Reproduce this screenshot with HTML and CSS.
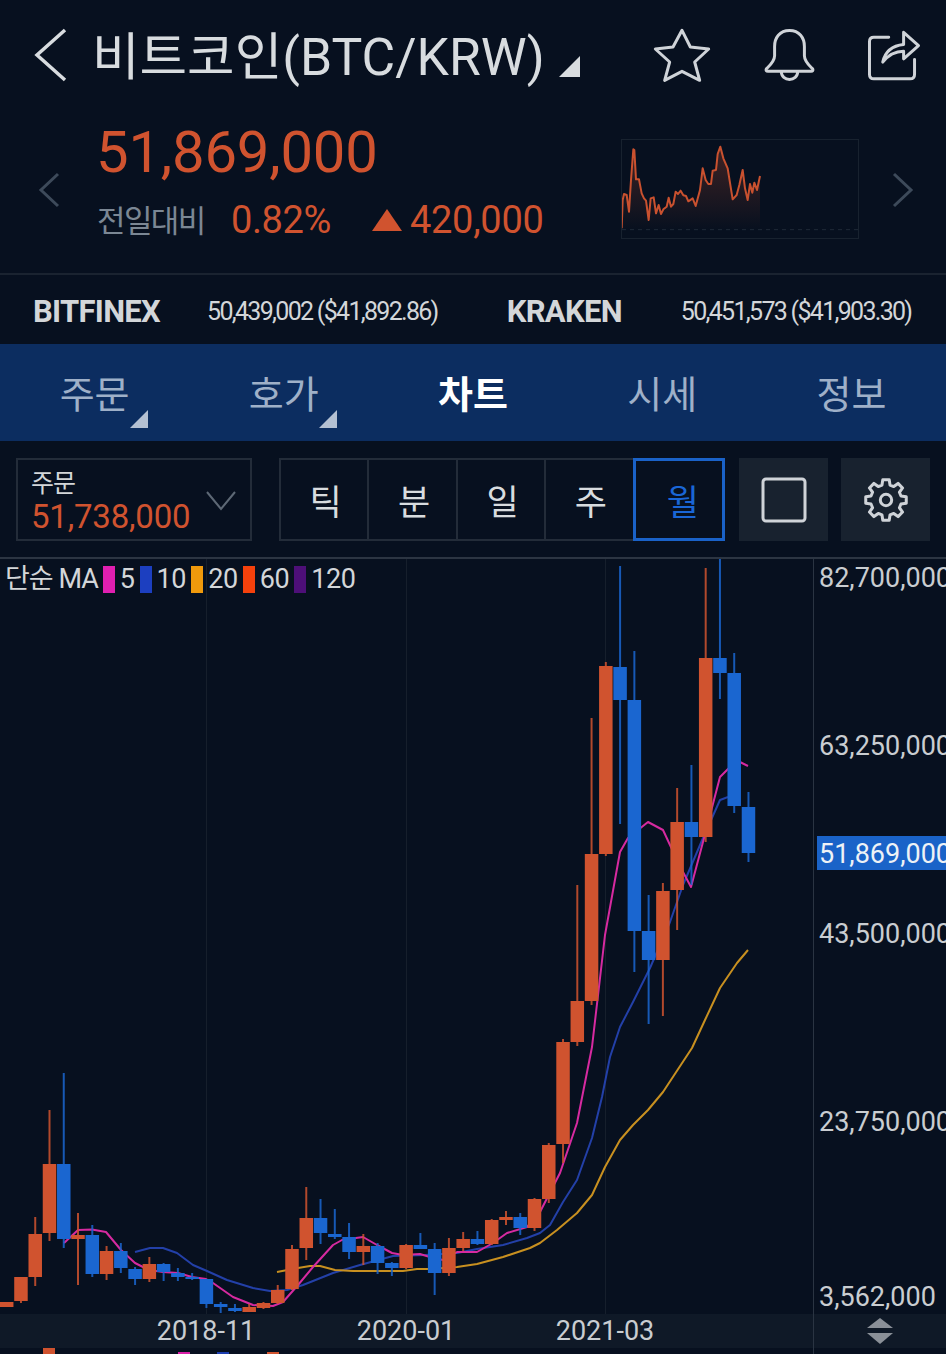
FILE: index.html
```html
<!DOCTYPE html>
<html lang="ko">
<head>
  <meta charset="UTF-8" />
  <meta name="viewport" content="width=device-width, initial-scale=1.0"/>
  <title>비트코인 차트</title>
  <link rel="stylesheet" href="styles.css">
</head>
<body>

  <header class="topbar">
    <svg class="back" width="36" height="56" viewBox="0 0 36 56"><path d="M32 3 L4 28 L32 53" /></svg>
    <h1 class="coin">비트코인(BTC/KRW)</h1>
    <span class="corner corner-title"></span>
    <div class="top-icons">
      <svg width="58" height="55" viewBox="40 35 174 165"><path d="M127 42 L152 92 L207 98 L165 137 L180 192 L127 165 L75 192 L90 137 L47 98 L100 92 Z" /></svg>
      <svg width="53" height="55" viewBox="365 35 160 165"><path d="M445 42 C415 42 400 65 400 90 L400 118 C400 135 385 148 375 158 Q372 165 380 165 L510 165 Q518 165 515 158 C505 148 490 135 490 118 L490 90 C490 65 475 42 445 42 Z M420 165 C420 198 470 198 470 165" /></svg>
      <svg width="55" height="53" viewBox="680 35 165 160"><path d="M745 60 L700 60 Q687 60 687 73 L687 172 Q687 185 700 185 L810 185 Q823 185 823 172 L823 127" /><path d="M727 135 C735 100 760 85 790 82 L790 45 L835 85 L790 125 L790 102 C765 102 745 112 727 135 Z" /></svg>
    </div>
  </header>

  <section class="price-row">
    <svg class="nav-arrow" width="22" height="36" viewBox="0 0 22 36"><path d="M20 2 L3 18 L20 34" /></svg>
    <div class="price-block">
      <div class="price">51,869,000</div>
      <div class="change">
        <span class="change-label">전일대비</span>
        <span class="change-pct">0.82%</span>
        <span class="change-tri"></span>
        <span class="change-amt">420,000</span>
      </div>
    </div>
    <div class="spark">
      <svg width="236" height="98" viewBox="36 30 708 294">
        <defs>
          <linearGradient id="sparkFill" x1="0" y1="0" x2="0" y2="1">
            <stop offset="0" stop-color="#d0532f" stop-opacity="0.28"/>
            <stop offset="1" stop-color="#d0532f" stop-opacity="0"/>
          </linearGradient>
        </defs>
        <polygon id="sparkArea" fill="url(#sparkFill)" />
        <line x1="36" y1="299" x2="744" y2="299" stroke="#1f2a38" stroke-width="3" stroke-dasharray="12 12" />
        <polyline id="sparkLine" fill="none" stroke="#c9512f" stroke-width="6" stroke-linejoin="round" />
      </svg>
    </div>
    <svg class="nav-arrow next" width="22" height="36" viewBox="0 0 22 36"><path d="M2 2 L19 18 L2 34" /></svg>
  </section>

  <section class="exchanges">
    <b class="ex-name">BITFINEX</b>
    <span class="ex-val">50,439,002 ($41,892.86)</span>
    <b class="ex-name">KRAKEN</b>
    <span class="ex-val">50,451,573 ($41,903.30)</span>
  </section>

  <nav class="tabs">
    <div class="tab">주문<span class="corner corner-tab"></span></div>
    <div class="tab">호가<span class="corner corner-tab"></span></div>
    <div class="tab active">차트</div>
    <div class="tab">시세</div>
    <div class="tab">정보</div>
  </nav>

  <section class="toolbar">
    <div class="order-box">
      <div>
        <div class="order-label">주문</div>
        <div class="order-val">51,738,000</div>
      </div>
      <svg width="30" height="20" viewBox="0 0 30 20"><path d="M1 1 L15 18 L29 1" /></svg>
    </div>
    <div class="periods">
      <button>틱</button>
      <button>분</button>
      <button>일</button>
      <button>주</button>
      <button class="on">월</button>
    </div>
    <button class="tool">
      <svg width="46" height="46" viewBox="0 0 46 46"><rect x="2" y="2" width="42" height="42" rx="3" /></svg>
    </button>
    <button class="tool">
      <svg width="46" height="46" viewBox="-23 -23 46 46"><path id="gear" /><circle cx="0" cy="0" r="5.700" /></svg>
    </button>
  </section>

  <section class="chart">
    <div class="legend">
      <span class="legend-name">단순 MA</span>
      <i class="sw pink"></i><span>5</span>
      <i class="sw navy"></i><span>10</span>
      <i class="sw amber"></i><span>20</span>
      <i class="sw red"></i><span>60</span>
      <i class="sw violet"></i><span>120</span>
    </div>
    <svg id="chart" width="946" height="795" viewBox="0 559 946 795">
      <g class="grid">
        <line x1="206.500" y1="559" x2="206.500" y2="1314" />
        <line x1="406.500" y1="559" x2="406.500" y2="1314" />
        <line x1="605.500" y1="559" x2="605.500" y2="1314" />
      </g>
      <line class="axis-line" x1="813.500" y1="559" x2="813.500" y2="1354" />
      <g id="maLines"></g>
      <g id="candles"></g>
      <rect class="date-bar" x="0" y="1314" width="946" height="34" />
      <line class="axis-line" x1="813.500" y1="1314" x2="813.500" y2="1354" />
      <g class="axis-text">
        <text x="819" y="587">82,700,000</text>
        <text x="819" y="755">63,250,000</text>
        <rect class="last-price" x="817" y="836" width="129" height="34" />
        <text x="819" y="863" class="last-text">51,869,000</text>
        <text x="819" y="943">43,500,000</text>
        <text x="819" y="1131">23,750,000</text>
        <text x="819" y="1306">3,562,000</text>
      </g>
      <g class="date-text">
        <text x="206" y="1340">2018-11</text>
        <text x="406" y="1340">2020-01</text>
        <text x="605" y="1340">2021-03</text>
      </g>
      <polygon class="resize" points="880,1318 893,1328 867,1328" />
      <polygon class="resize" points="867,1333 893,1333 880,1344" />
      <rect class="peek p-red" x="43" y="1348" width="12" height="6" />
      <rect class="peek p-pink" x="178" y="1352" width="12" height="2" />
      <rect class="peek p-navy" x="217" y="1352" width="12" height="2" />
      <rect class="peek p-red" x="267" y="1352" width="12" height="2" />
    </svg>
  </section>

  <script src="chart.js"></script>
</body>
</html>
```

FILE: styles.css
```css
* { box-sizing: border-box; }
html, body {
  margin: 0;
  width: 946px;
  height: 1354px;
  overflow: hidden;
  background: #07101f;
  color: #d8dcdf;
  font-family: Roboto, "Noto Sans CJK KR", sans-serif;
}
svg { display: block; }

.topbar {
  height: 110px;
  display: flex;
  align-items: center;
  padding-left: 33px;
}
.back path { stroke: #d8dcdf; stroke-width: 3.5; fill: none; }
.coin {
  margin: -6px 0 0 23px;
  font-size: 51.7px;
  font-weight: 400;
  color: #d8dcdf;
  white-space: nowrap;
}
.corner {
  display: block;
  width: 0;
  height: 0;
  border-style: solid;
  border-color: transparent;
}
.corner-title {
  margin: 22px 0 0 14px;
  border-width: 0 0 21px 21px;
  border-bottom-color: #d8dcdf;
}
.top-icons {
  margin-left: auto;
  display: flex;
  align-items: center;
  gap: 51.5px;
  padding-right: 24px;
}
.top-icons path { stroke: #cfd3d8; stroke-width: 9; stroke-linejoin: round; stroke-linecap: round; fill: none; }

.price-row {
  height: 165px;
  display: flex;
  align-items: flex-start;
  padding-left: 38px;
  border-bottom: 2px solid #1a2330;
}
.nav-arrow { margin-top: 62px; }
.nav-arrow path { stroke: #3d4a5a; stroke-width: 3; fill: none; }
.nav-arrow.next { margin-left: 33px; }
.price-block { margin-left: 36px; width: 525px; }
.price {
  font-size: 58px;
  line-height: 68px;
  margin-top: 8px;
  letter-spacing: -0.2px;
  color: #d0532f;
}
.change {
  display: flex;
  align-items: center;
  margin-top: 12px;
  height: 44px;
}
.change-label { font-size: 31px; letter-spacing: -1.6px; color: #7b8794; width: 134px; margin-left: 1px; margin-top: -3px; }
.change-pct { font-size: 38px; letter-spacing: -0.4px; color: #d0532f; width: 141px; }
.change-tri {
  width: 0;
  height: 0;
  border-style: solid;
  border-width: 0 15.5px 22px;
  border-color: transparent transparent #d0532f;
  margin-right: 8px;
}
.change-amt { font-size: 38px; letter-spacing: -0.3px; color: #d0532f; }
.spark {
  margin-top: 29px;
  width: 238px;
  height: 100px;
  border: 1px solid #18222f;
}

.exchanges {
  height: 69px;
  display: flex;
  align-items: center;
  padding: 4px 0 0 33px;
}
.ex-name { font-size: 31px; letter-spacing: -0.7px; color: #d3d6d9; font-weight: 700; }
.ex-val { font-size: 25px; letter-spacing: -1.7px; color: #d3d6d9; margin-left: 47px; margin-right: 69px; }
.ex-val:last-child { margin-right: 0; margin-left: 59px; }

.tabs {
  height: 97px;
  display: grid;
  grid-template-columns: repeat(5, 1fr);
  background: #0c2d60;
}
.tab {
  position: relative;
  display: flex;
  align-items: center;
  justify-content: center;
  font-size: 38px;
  color: #9fb0c8;
  padding-bottom: 2px;
}
.tab.active { color: #fff; font-weight: 700; }
.corner-tab {
  position: absolute;
  right: 41px;
  bottom: 13px;
  border-width: 0 0 18px 18px;
  border-bottom-color: #b4c0d2;
}

.toolbar {
  height: 118px;
  display: flex;
  align-items: flex-start;
  padding: 17px 0 0 16px;
  border-bottom: 2px solid #2c3542;
}
.order-box {
  width: 236px;
  height: 83px;
  border: 2px solid #232c39;
  padding: 10px 14px 8px 13px;
  display: flex;
  align-items: center;
  justify-content: space-between;
}
.order-box path { stroke: #5d6875; stroke-width: 2; fill: none; }
.order-label { font-size: 25px; line-height: 32px; color: #d3d6d9; letter-spacing: -1px; }
.order-val { font-size: 33px; line-height: 34px; color: #d0532f; letter-spacing: -0.2px; }
.periods {
  margin-left: 27px;
  display: flex;
  width: 446px;
  height: 83px;
  border: 2px solid #232c39;
}
.periods button {
  flex: 1 1 0;
  background: none;
  border: 0;
  border-right: 2px solid #232c39;
  color: #d8dcdf;
  font-family: inherit;
  font-size: 35px;
  padding: 0;
  text-indent: 3px;
}
.periods button.on {
  border: 3px solid #1a62c8;
  color: #1a66d6;
  margin: -2px;
  text-indent: 8px;
}
.tool {
  margin-left: 14px;
  width: 89px;
  height: 83px;
  padding: 0;
  border: 0;
  background: #18222f;
  display: flex;
  align-items: center;
  justify-content: center;
}
.tool + .tool { margin-left: 13px; }
.tool rect, .tool path, .tool circle { stroke: #cfd3d8; stroke-width: 3; stroke-linejoin: round; fill: none; }

.chart { position: relative; height: 795px; }
.legend {
  position: absolute;
  left: 5px;
  top: 6px;
  display: flex;
  align-items: center;
  font-size: 27px;
  line-height: 28px;
  letter-spacing: -0.4px;
  color: #d3d6d9;
}
.legend-name { letter-spacing: -1px; }
.sw { display: block; width: 12px; height: 27px; margin: 0 5px 0 5px; }
.pink { background: #e01fb0; }
.navy { background: #1c3fc0; }
.amber { background: #f09a0c; }
.red { background: #f5410c; }
.violet { background: #4d0f78; }

.grid line { stroke: #161f2c; stroke-width: 1; }
.axis-line { stroke: #2a3442; stroke-width: 1; }
.date-bar { fill: #0f1927; }
.axis-text text { font-size: 27px; fill: #c9cdd1; }
.axis-text .last-text { fill: #eef2f6; }
.last-price { fill: #1a63c8; }
.date-text text { font-size: 27px; fill: #c9cdd1; text-anchor: middle; }
.resize { fill: #8a9098; }
.p-red { fill: #d0532f; }
.p-pink { fill: #d91fa8; }
.p-navy { fill: #1c3db0; }
```

FILE: chart.js
```js
// monthly candles: dir, body top, body bottom, wick top, wick bottom (page y)
const candles = [
  ["u",1302,1307,1302,1307],["u",1277,1301,1277,1303],["u",1234,1277,1217,1286],["u",1164,1233,1110,1241],
  ["d",1164,1239,1073,1248],["u",1235,1239,1213,1285],["d",1235,1274,1225,1277],["u",1251,1274,1246,1280],
  ["d",1251,1268,1243,1273],["d",1269,1279,1267,1285],["u",1264,1279,1257,1282],["d",1264,1272,1263,1281],
  ["d",1273,1277,1268,1281],["d",1277,1279,1273,1280],["d",1279,1304,1279,1308],["d",1304,1307,1302,1313],
  ["d",1308,1311,1304,1312],["u",1307,1312,1304,1312],["u",1303,1308,1302,1309],["u",1290,1303,1285,1304],
  ["u",1249,1289,1245,1290],["u",1218,1248,1187,1260],["d",1218,1233,1199,1244],["d",1234,1237,1209,1239],
  ["d",1237,1252,1223,1259],["u",1246,1252,1234,1265],["d",1246,1263,1243,1274],["d",1263,1268,1262,1276],
  ["u",1245,1268,1244,1269],["d",1245,1249,1233,1249],["d",1249,1273,1243,1295],["u",1248,1273,1238,1276],
  ["u",1239,1248,1232,1251],["d",1239,1244,1231,1245],["u",1220,1244,1219,1245],["u",1217,1220,1211,1225],
  ["d",1217,1228,1213,1235],["u",1199,1228,1198,1231],["u",1145,1199,1143,1203],["u",1042,1144,1039,1163],
  ["u",1001,1042,885,1046],["u",854,1001,718,1005],["u",666,854,662,856],["d",667,700,566,824],
  ["d",700,931,651,972],["d",931,960,895,1024],["u",891,960,883,1016],["u",822,890,788,930],
  ["d",822,837,765,885],["u",658,837,568,842],["d",658,673,558,699],["d",673,806,653,813],
  ["d",807,853,792,862]
];

const maLines = [
  { color: "#2340a8", width: 2, pts: [135,1252,150,1248,163,1248,177,1253,193,1265,207,1271,227,1280,253,1288,270,1291,287,1290,303,1285,333,1273,360,1265,393,1256,425,1255,457,1253,477,1249,503,1245,527,1238,540,1233,550,1225,563,1202,577,1180,592,1138,602,1097,610,1057,620,1027,633,1002,650,968,670,922,683,885,703,838,720,800,728,797] },
  { color: "#c89020", width: 2, pts: [277,1272,298,1268,310,1266,320,1266,335,1270,353,1271,380,1271,403,1271,417,1269,430,1269,457,1267,477,1264,503,1257,530,1248,540,1243,557,1230,577,1213,592,1195,605,1167,620,1140,633,1125,648,1110,663,1092,692,1048,705,1020,720,988,737,963,748,950] },
  { color: "#d62aa0", width: 2, pts: [64,1243,78,1230,92,1229.500,106,1232,121,1250,135,1263,149,1270,163,1272,178,1273,192,1277,206,1279,213,1283,233,1297,253,1305,273,1306,283,1302,298,1285,313,1267,333,1245,342,1240,363,1237,377,1245,392,1253,403,1255,420,1254,433,1258,443,1260,457,1252,477,1252,493,1243,507,1233,527,1227,540,1212,560,1173,577,1123,592,1047,605,935,620,852,628,838,648,822,663,830,670,845,683,872,691,887,703,842,720,777,730,767,740,762,748,766] }
];

const spark = [35,295,38,210,42,192,50,195,57,245,63,150,70,58,73,60,78,148,87,148,95,190,102,205,108,212,116,270,122,205,131,202,138,250,146,225,153,252,160,238,170,230,176,203,183,230,190,222,197,185,204,192,212,182,220,196,228,198,235,214,248,205,257,228,270,180,278,115,287,150,295,162,303,162,308,122,318,120,323,72,331,50,340,85,353,115,368,208,380,195,388,165,398,120,405,175,413,210,420,162,427,188,433,158,441,180,450,138];

const NS = "http://www.w3.org/2000/svg";
const candleColor = { u: "#d0532f", d: "#1a66d0" };
const step = 14.265, bodyWidth = 13.5;

function add(parent, tag, attrs) {
  const el = document.createElementNS(NS, tag);
  Object.keys(attrs).forEach(k => el.setAttribute(k, attrs[k]));
  parent.appendChild(el);
}

function pairs(list) {
  const out = [];
  for (let i = 0; i < list.length; i += 2) out.push(list[i] + "," + list[i + 1]);
  return out.join(" ");
}

function gearPath(teeth, outer, root) {
  const pt = (r, deg) => {
    const a = deg * Math.PI / 180;
    return (r * Math.cos(a)).toFixed(2) + " " + (r * Math.sin(a)).toFixed(2);
  };
  let d = "";
  for (let k = 0; k < teeth; k++) {
    const a = k * 360 / teeth - 90;
    d += (k ? "L" : "M") + pt(root, a - 15) + "L" + pt(outer, a - 9) + "L" + pt(outer, a + 9) + "L" + pt(root, a + 15);
  }
  return d + "Z";
}

const maGroup = document.getElementById("maLines");
maLines.forEach(m => {
  add(maGroup, "polyline", { points: pairs(m.pts), fill: "none", stroke: m.color, "stroke-width": m.width, "stroke-linejoin": "round" });
});

const candleGroup = document.getElementById("candles");
candles.forEach((c, i) => {
  const x = 6.7 + step * i;
  const color = candleColor[c[0]];
  add(candleGroup, "line", { x1: x, x2: x, y1: c[3], y2: c[4], stroke: color, "stroke-width": 2, opacity: 0.85 });
  add(candleGroup, "rect", { x: x - bodyWidth / 2, y: c[1], width: bodyWidth, height: c[2] - c[1], fill: color });
});

document.getElementById("sparkLine").setAttribute("points", pairs(spark));
document.getElementById("sparkArea").setAttribute("points", "35,300 " + pairs(spark) + " 450,300");
document.getElementById("gear").setAttribute("d", gearPath(8, 20.5, 15.5));
```
